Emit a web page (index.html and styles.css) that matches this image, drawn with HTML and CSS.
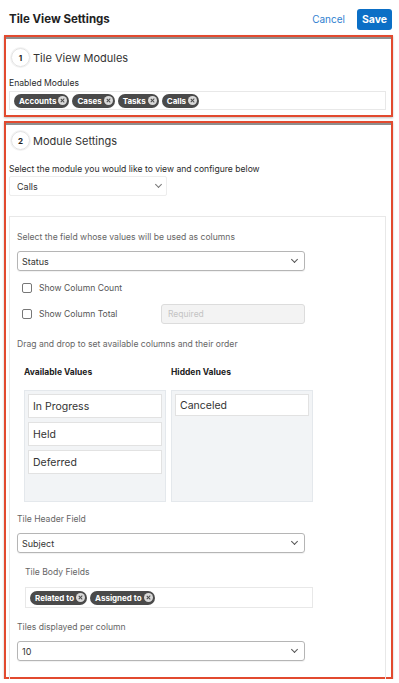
FILE: index.html
```html
<!DOCTYPE html>
<html lang="en">
<head>
  <meta charset="UTF-8">
  <meta name="viewport" content="width=device-width, initial-scale=1.0">
  <title>Tile View Settings</title>
  <link rel="stylesheet" href="styles.css">
</head>
<body>
  <div class="topbar">
    <div class="title">Tile View Settings</div>
    <div class="actions">
      <a class="cancel">Cancel</a>
      <button class="save">Save</button>
    </div>
  </div>

  <div class="section section-modules">
    <div class="step">
      <span class="step-num">1</span>
      <span class="step-title">Tile View Modules</span>
    </div>
    <div class="label">Enabled Modules</div>
    <div class="pill-box">
      <span class="pill">Accounts<i class="pill-x"></i></span>
      <span class="pill">Cases<i class="pill-x"></i></span>
      <span class="pill">Tasks<i class="pill-x"></i></span>
      <span class="pill">Calls<i class="pill-x"></i></span>
    </div>
  </div>

  <div class="section section-settings">
    <div class="step">
      <span class="step-num">2</span>
      <span class="step-title">Module Settings</span>
    </div>
    <div class="label">Select the module you would like to view and configure below</div>
    <div class="select select-plain">Calls<i class="chev"></i></div>

    <div class="panel">
      <div class="hint">Select the field whose values will be used as columns</div>
      <div class="select">Status<i class="chev"></i></div>
      <div class="check-row">
        <span class="checkbox"></span>
        <span class="check-label">Show Column Count</span>
      </div>
      <div class="check-row">
        <span class="checkbox"></span>
        <span class="check-label">Show Column Total</span>
        <span class="required">Required</span>
      </div>
      <div class="hint hint-drag">Drag and drop to set available columns and their order</div>

      <div class="columns">
        <div class="column">
          <div class="column-head">Available Values</div>
          <div class="list">
            <div class="item">In Progress</div>
            <div class="item">Held</div>
            <div class="item">Deferred</div>
          </div>
        </div>
        <div class="column">
          <div class="column-head">Hidden Values</div>
          <div class="list">
            <div class="item item-short">Canceled</div>
          </div>
        </div>
      </div>

      <div class="hint hint-header">Tile Header Field</div>
      <div class="select">Subject<i class="chev"></i></div>

      <div class="hint hint-body">Tile Body Fields</div>
      <div class="pill-box pill-box-body">
        <span class="pill">Related to<i class="pill-x"></i></span>
        <span class="pill">Assigned to<i class="pill-x"></i></span>
      </div>

      <div class="hint hint-tiles">Tiles displayed per column</div>
      <div class="select">10<i class="chev"></i></div>
    </div>
  </div>
</body>
</html>
```

FILE: styles.css
```css
body {
  margin: 0;
  font-family: Inter, 'Helvetica Neue', Arial, sans-serif;
  color: #333;
  background: #fff;
  width: 399px;
}
.topbar {
  display: flex;
  justify-content: space-between;
  align-items: center;
  height: 35px;
  padding: 3px 7px 0 9px;
  box-sizing: border-box;
}
.title {
  font-size: 11.5px;
  font-weight: 700;
  color: #222;
}
.actions {
  display: flex;
  align-items: center;
  gap: 12px;
}
.cancel {
  color: #2f7fd0;
  font-size: 10px;
}
.save {
  background: #0b6fc6;
  color: #fff;
  border: none;
  border-radius: 3px;
  font-family: inherit;
  font-size: 10.5px;
  font-weight: 700;
  width: 35px;
  height: 21px;
  padding: 0;
}
.section {
  margin-left: 4px;
  width: 389px;
  border: 2px solid #e24a2f;
  box-sizing: border-box;
  box-shadow: inset 0 2px 0 #8e8e8e, 0 1px 2px rgba(0, 0, 0, 0.25);
  padding: 0 5px 0 3px;
}
.section-modules {
  height: 82px;
  padding-top: 11px;
}
.section-settings {
  margin-top: 4px;
  height: 558px;
  padding-top: 8px;
}
.step {
  display: flex;
  align-items: center;
  gap: 3px;
  margin-left: 2px;
}
.step-num {
  width: 17px;
  height: 17px;
  border-radius: 50%;
  border: 1px solid #e2e2e2;
  box-shadow: 0 0 0 1px #f3f3f3;
  display: flex;
  align-items: center;
  justify-content: center;
  font-size: 8px;
  font-weight: 700;
  color: #222;
}
.step-title {
  font-size: 11px;
  color: #333;
}
.label {
  font-size: 8.6px;
  color: #2a2a2a;
  margin-top: 10px;
  line-height: 12px;
}
.section-settings .label {
  margin-top: 13px;
}
.pill-box {
  margin-top: 2px;
  border: 1px solid #e8e8e8;
  height: 19px;
  box-sizing: border-box;
  display: flex;
  align-items: center;
  gap: 3px;
  padding-left: 4px;
}
.pill {
  display: inline-flex;
  align-items: center;
  gap: 2px;
  height: 14px;
  padding: 0 2px 0 5px;
  border-radius: 8px;
  background: #4a4a4a;
  color: #fff;
  font-size: 8px;
  font-weight: 700;
}
.pill-x {
  width: 9px;
  height: 9px;
  border-radius: 50%;
  background: #d9d9d9;
  position: relative;
}
.pill-x::before,
.pill-x::after {
  content: '';
  position: absolute;
  left: 4px;
  top: 2px;
  width: 1.2px;
  height: 5px;
  background: #4a4a4a;
  transform: rotate(45deg);
}
.pill-x::after {
  transform: rotate(-45deg);
}
.select {
  position: relative;
  width: 288px;
  height: 20px;
  box-sizing: border-box;
  border: 1px solid #b5b5b5;
  border-radius: 3px;
  box-shadow: 0 1px 1px rgba(0, 0, 0, 0.06);
  font-size: 9px;
  color: #333;
  display: flex;
  align-items: center;
  padding-left: 4px;
  margin-top: 8px;
}
.select-plain {
  width: 158px;
  border-color: #ededed;
  box-shadow: none;
  border-radius: 2px;
  margin-top: 1px;
  padding-left: 7px;
}
.chev {
  position: absolute;
  right: 7px;
  top: 5px;
  width: 4px;
  height: 4px;
  border-right: 1.3px solid #555;
  border-bottom: 1.3px solid #555;
  transform: rotate(45deg);
}
.select-plain .chev {
  right: 5px;
  border-color: #777;
  border-width: 0 1px 1px 0;
}
.panel {
  margin-top: 20px;
  border: 1px solid #e8e8e8;
  border-bottom: none;
  height: 464px;
  box-sizing: border-box;
  padding: 14px 0 0 7px;
}
.hint {
  font-size: 8.6px;
  color: #666;
  line-height: 12px;
}
.check-row {
  display: flex;
  align-items: center;
  height: 20px;
  margin-top: 7px;
  padding-left: 5px;
}
.check-row + .check-row {
  margin-top: 6px;
}
.checkbox {
  width: 8px;
  height: 8px;
  border: 1px solid #777;
  border-radius: 2px;
  margin-right: 7px;
}
.check-label {
  font-size: 8.6px;
  color: #555;
  width: 122px;
}
.required {
  width: 144px;
  height: 20px;
  box-sizing: border-box;
  border: 1px solid #dcdcdc;
  border-radius: 3px;
  background: #f3f3f3;
  font-size: 8.5px;
  color: #c4c4c4;
  display: flex;
  align-items: center;
  padding-left: 6px;
}
.hint-drag {
  margin-top: 14px;
}
.columns {
  display: flex;
  gap: 5px;
  margin-top: 16px;
  padding-left: 7px;
}
.column {
  width: 142px;
}
.column-head {
  font-size: 8.5px;
  font-weight: 700;
  color: #222;
  line-height: 12px;
}
.list {
  margin-top: 12px;
  height: 112px;
  box-sizing: border-box;
  border: 1px solid #e4e8ec;
  background: #f2f4f6;
  padding: 3px;
  display: flex;
  flex-direction: column;
  gap: 4px;
}
.item {
  height: 24px;
  box-sizing: border-box;
  border: 1px solid #e2e2e2;
  background: #fff;
  font-size: 10.5px;
  color: #333;
  display: flex;
  align-items: center;
  padding-left: 4px;
}
.item-short {
  height: 22px;
}
.hint-header {
  margin-top: 11px;
}
.hint-body {
  margin-top: 13px;
  padding-left: 8px;
}
.pill-box-body {
  width: 288px;
  margin-left: 8px;
  margin-top: 9px;
  height: 21px;
}
.hint-tiles {
  margin-top: 13px;
}
```
